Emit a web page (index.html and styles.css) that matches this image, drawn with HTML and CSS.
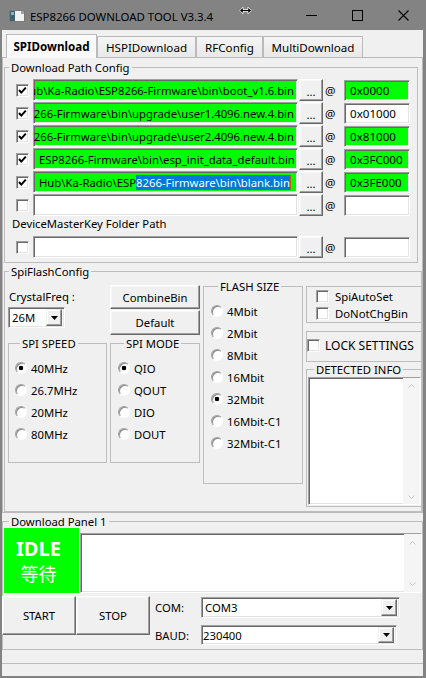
FILE: index.html
```html
<!DOCTYPE html>
<html>
<head>
<meta charset="utf-8">
<link rel="stylesheet" href="styles.css">
</head>
<body>
<div class="win">
  <div class="titlebar">
    <svg class="appicon" width="16" height="12" viewBox="0 0 16 12"><rect x="0.5" y="0.5" width="15" height="11" fill="#f2f2f2" stroke="#7a7a7a"/><rect x="1" y="1" width="5" height="10" fill="#3f6470"/><rect x="2" y="2" width="3" height="3" fill="#8fb2b8"/><rect x="12" y="1" width="3" height="3" fill="#9aa4a6"/></svg>
    <span class="title">ESP8266 DOWNLOAD TOOL V3.3.4</span>
    <svg class="cursor" width="13" height="9" viewBox="0 0 13 9"><path d="M0.7 4.5 L4 1.2 L4 3.5 L9 3.5 L9 1.2 L12.3 4.5 L9 7.8 L9 5.5 L4 5.5 L4 7.8 Z" fill="#000" stroke="#fff" stroke-width="0.8"/></svg>
    <div class="caps">
      <span class="cap"><svg width="11" height="11" viewBox="0 0 11 11"><line x1="0" y1="5.5" x2="11" y2="5.5" stroke="#000"/></svg></span>
      <span class="cap"><svg width="11" height="11" viewBox="0 0 11 11"><rect x="0.5" y="0.5" width="10" height="10" fill="none" stroke="#000"/></svg></span>
      <span class="cap"><svg width="11" height="11" viewBox="0 0 11 11"><path d="M0.5 0.5 L10.5 10.5 M10.5 0.5 L0.5 10.5" stroke="#000" stroke-width="1.1"/></svg></span>
    </div>
  </div>

  <div class="client">
    <div class="tabs">
      <div class="tab sel t1">SPIDownload</div>
      <div class="tab t2">HSPIDownload</div>
      <div class="tab t3">RFConfig</div>
      <div class="tab t4">MultiDownload</div>
    </div>

    <div class="tabpanel">
      <fieldset class="grp g-path">
        <legend>Download Path Config</legend>

        <div class="prow">
          <span class="cb"><svg width="11" height="11" viewBox="0 0 11 11"><polyline points="2,5 4.3,7.6 8.8,2.6" fill="none" stroke="#000" stroke-width="2"/></svg></span>
          <div class="pf green rt"><span>C:\GitHub\Ka-Radio\ESP8266-Firmware\bin\boot_v1.6.bin</span></div>
          <span class="btn dots">...</span>
          <span class="at">@</span>
          <div class="af green">0x0000</div>
        </div>
        <div class="prow">
          <span class="cb"><svg width="11" height="11" viewBox="0 0 11 11"><polyline points="2,5 4.3,7.6 8.8,2.6" fill="none" stroke="#000" stroke-width="2"/></svg></span>
          <div class="pf green rt"><span>Ka-Radio\ESP8266-Firmware\bin\upgrade\user1.4096.new.4.bin</span></div>
          <span class="btn dots">...</span>
          <span class="at">@</span>
          <div class="af">0x01000</div>
        </div>
        <div class="prow">
          <span class="cb"><svg width="11" height="11" viewBox="0 0 11 11"><polyline points="2,5 4.3,7.6 8.8,2.6" fill="none" stroke="#000" stroke-width="2"/></svg></span>
          <div class="pf green rt"><span>Ka-Radio\ESP8266-Firmware\bin\upgrade\user2.4096.new.4.bin</span></div>
          <span class="btn dots">...</span>
          <span class="at">@</span>
          <div class="af green">0x81000</div>
        </div>
        <div class="prow">
          <span class="cb"><svg width="11" height="11" viewBox="0 0 11 11"><polyline points="2,5 4.3,7.6 8.8,2.6" fill="none" stroke="#000" stroke-width="2"/></svg></span>
          <div class="pf green"><span>ESP8266-Firmware\bin\esp_init_data_default.bin</span></div>
          <span class="btn dots">...</span>
          <span class="at">@</span>
          <div class="af green">0x3FC000</div>
        </div>
        <div class="prow">
          <span class="cb"><svg width="11" height="11" viewBox="0 0 11 11"><polyline points="2,5 4.3,7.6 8.8,2.6" fill="none" stroke="#000" stroke-width="2"/></svg></span>
          <div class="pf green"><span>Hub\Ka-Radio\ESP</span><span class="selt">8266-Firmware\bin\blank.bin</span><span class="caret"></span></div>
          <span class="btn dots">...</span>
          <span class="at">@</span>
          <div class="af green">0x3FE000</div>
        </div>
        <div class="prow">
          <span class="cb"></span>
          <div class="pf"></div>
          <span class="btn dots">...</span>
          <span class="at">@</span>
          <div class="af"></div>
        </div>

        <div class="dmk">DeviceMasterKey Folder Path</div>
        <div class="prow">
          <span class="cb"></span>
          <div class="pf"></div>
          <span class="btn dots">...</span>
          <span class="at">@</span>
          <div class="af"></div>
        </div>
      </fieldset>

      <fieldset class="grp g-spi">
        <legend>SpiFlashConfig</legend>
        <div class="spi-body">
          <div class="spi-lr">
            <div class="spi-top">
              <div class="crys">
                <div class="lbl">CrystalFreq :</div>
                <div class="combo c26"><span class="ctext">26M</span><span class="dd"><svg width="7" height="4" viewBox="0 0 7 4"><path d="M0 0 H7 L3.5 4 Z" fill="#000"/></svg></span></div>
              </div>
              <div class="btncol">
                <span class="btn b-comb">CombineBin</span>
                <span class="btn b-def">Default</span>
              </div>
            </div>
            <div class="spi-bot">
              <fieldset class="grp g-speed">
                <legend>SPI SPEED</legend>
                <div class="rrow"><span class="rd on"></span>40MHz</div>
                <div class="rrow"><span class="rd"></span>26.7MHz</div>
                <div class="rrow"><span class="rd"></span>20MHz</div>
                <div class="rrow"><span class="rd"></span>80MHz</div>
              </fieldset>
              <fieldset class="grp g-mode">
                <legend>SPI MODE</legend>
                <div class="rrow"><span class="rd on"></span>QIO</div>
                <div class="rrow"><span class="rd"></span>QOUT</div>
                <div class="rrow"><span class="rd"></span>DIO</div>
                <div class="rrow"><span class="rd"></span>DOUT</div>
              </fieldset>
            </div>
          </div>

          <fieldset class="grp g-flash">
            <legend>FLASH SIZE</legend>
            <div class="rrow"><span class="rd"></span>4Mbit</div>
            <div class="rrow"><span class="rd"></span>2Mbit</div>
            <div class="rrow"><span class="rd"></span>8Mbit</div>
            <div class="rrow"><span class="rd"></span>16Mbit</div>
            <div class="rrow"><span class="rd on"></span>32Mbit</div>
            <div class="rrow"><span class="rd"></span>16Mbit-C1</div>
            <div class="rrow"><span class="rd"></span>32Mbit-C1</div>
          </fieldset>

          <div class="colD">
            <fieldset class="grp g-box1">
              <div class="crow"><span class="cb"></span>SpiAutoSet</div>
              <div class="crow"><span class="cb"></span>DoNotChgBin</div>
            </fieldset>
            <fieldset class="grp g-box2">
              <div class="crow lock"><span class="cb"></span>LOCK SETTINGS</div>
            </fieldset>
            <fieldset class="grp g-det">
              <legend>DETECTED INFO</legend>
              <div class="ta ta-det">
                <div class="ta-body"></div>
                <div class="sb">
                  <svg width="7" height="4" viewBox="0 0 7 4"><polyline points="0.5,3.5 3.5,0.5 6.5,3.5" fill="none" stroke="#c6c6c6"/></svg>
                  <svg width="7" height="4" viewBox="0 0 7 4"><polyline points="0.5,0.5 3.5,3.5 6.5,0.5" fill="none" stroke="#c6c6c6"/></svg>
                </div>
              </div>
            </fieldset>
          </div>
        </div>
      </fieldset>
    </div>

    <fieldset class="grp g-panel">
      <legend>Download Panel 1</legend>
      <div class="prow1">
        <div class="idle"><span class="idle-en">IDLE</span><span class="idle-zh">等待</span></div>
        <div class="ta ta-log">
          <div class="ta-body"></div>
          <div class="sb">
            <svg width="7" height="4" viewBox="0 0 7 4"><polyline points="0.5,3.5 3.5,0.5 6.5,3.5" fill="none" stroke="#c6c6c6"/></svg>
            <svg width="7" height="4" viewBox="0 0 7 4"><polyline points="0.5,0.5 3.5,3.5 6.5,0.5" fill="none" stroke="#c6c6c6"/></svg>
          </div>
        </div>
      </div>
      <div class="prow2">
        <span class="btn b-start">START</span>
        <span class="btn b-stop">STOP</span>
        <div class="ports">
          <span class="plbl l-com">COM:</span>
          <div class="combo c-com"><span class="ctext">COM3</span><span class="dd"><svg width="7" height="4" viewBox="0 0 7 4"><path d="M0 0 H7 L3.5 4 Z" fill="#000"/></svg></span></div>
          <span class="plbl l-baud">BAUD:</span>
          <div class="combo c-baud"><span class="ctext">230400</span><span class="dd"><svg width="7" height="4" viewBox="0 0 7 4"><path d="M0 0 H7 L3.5 4 Z" fill="#000"/></svg></span></div>
        </div>
      </div>
    </fieldset>
    <div class="status"></div>
  </div>
</div>
</body>
</html>
```

FILE: styles.css
```css
* { box-sizing: border-box; }
body {
  margin: 0;
  background: #838383;
  font-family: "Noto Sans", "Noto Sans CJK SC", sans-serif;
  font-size: 11.3px;
  color: #000;
}
.win {
  width: 426px;
  height: 678px;
  display: flex;
  flex-direction: column;
  background: #838383;
  overflow: hidden;
}

/* title bar */
.titlebar {
  height: 30px;
  flex: none;
  display: flex;
  align-items: center;
  position: relative;
}
.appicon { margin-left: 9px; margin-top: 2px; flex: none; }
.title { margin-left: 5px; margin-top: 3px; font-size: 11.4px; white-space: nowrap; }
.cursor { position: absolute; left: 239px; top: 6px; }
.caps { margin-left: auto; display: flex; }
.cap {
  width: 46px;
  height: 30px;
  display: flex;
  align-items: center;
  justify-content: center;
}

/* client */
.client {
  flex: 1;
  margin: 0 3px 2px 2px;
  background: #f0f0f0;
  display: flex;
  flex-direction: column;
}

/* tabs */
.tabs {
  height: 27px;
  flex: none;
  display: flex;
  align-items: flex-end;
  padding-left: 4px;
}
.tab {
  height: 21px;
  border: 1px solid #bababa;
  border-bottom: 0;
  background: linear-gradient(#f5f5f5, #e8e8e8);
  display: flex;
  align-items: center;
  justify-content: center;
  font-size: 11.6px;
}
.tab.sel {
  height: 24px;
  margin-bottom: -1px;
  background: #fafafa;
  font-weight: bold;
  position: relative;
  z-index: 1;
  padding-bottom: 1px;
}
.t1 { width: 91px; }
.t2 { width: 99px; }
.t3 { width: 67px; }
.t4 { width: 100px; }

.tabpanel {
  height: 456px;
  flex: none;
  border: 1px solid #bababa;
  padding: 2px 0 0 1px;
}

/* group boxes */
.grp {
  margin: 0;
  padding: 0;
  border: 1px solid #bdbdbd;
  min-width: 0;
}
.grp > legend {
  padding: 0 2px;
  font-size: 11.3px;
  line-height: 13px;
}

/* download path config */
.g-path {
  margin-top: 1px;
  width: 414px;
  padding: 5px 0 3px 0;
}
.g-path > legend { margin-left: 4px; }

.prow {
  display: flex;
  align-items: center;
  height: 22px;
  margin-bottom: 1px;
  padding-left: 11px;
}

.cb {
  width: 13px;
  height: 13px;
  flex: none;
  background: #fff;
  border: 1px solid;
  border-color: #a0a0a0 #fff #fff #a0a0a0;
  box-shadow: inset 1px 1px #696969, inset -1px -1px #e3e3e3;
  display: flex;
  align-items: center;
  justify-content: center;
}
.prow .cb { margin-right: 4px; }

.pf, .af, .combo, .ta {
  border: 1px solid;
  border-color: #a0a0a0 #fff #fff #a0a0a0;
  box-shadow: inset 1px 1px #696969, inset -1px -1px #e3e3e3;
  background: #fff;
}
.pf {
  width: 265px;
  height: 22px;
  flex: none;
  display: flex;
  align-items: center;
  overflow: hidden;
  white-space: nowrap;
  padding: 0 3px 0 5px;
  font-size: 11.3px;
}
.pf.rt { justify-content: flex-end; }
.pf span { flex: none; }
.pf.green { background: #00ff00; }
.selt { background: #0078d7; color: #fff; }
.caret { width: 1px; height: 15px; background: #c06000; }

.btn {
  background: #f0f0f0;
  border: 1px solid;
  border-color: #fff #696969 #696969 #fff;
  box-shadow: inset -1px -1px #a0a0a0, inset 1px 1px #f8f8f8;
  display: flex;
  align-items: center;
  justify-content: center;
  font-size: 11.3px;
  flex: none;
}
.dots {
  width: 24px;
  height: 22px;
  margin-left: 1px;
  padding-top: 2px;
}
.at {
  margin-left: 2px;
  width: 11px;
  font-size: 11.6px;
  flex: none;
}
.af {
  margin-left: 8px;
  width: 66px;
  height: 21px;
  flex: none;
  display: flex;
  align-items: center;
  padding-left: 5px;
  font-size: 11.6px;
  white-space: nowrap;
  overflow: hidden;
}
.af.green { background: #00ff00; }

.dmk {
  margin: 1px 0 6px 7px;
  line-height: 13px;
}

/* spi flash config */
.g-spi {
  margin-top: 2px;
  width: 418px;
  height: 247px;
}
.g-spi > legend { margin-left: 4px; }
.spi-body {
  display: flex;
  align-items: flex-start;
  padding-left: 3px;
}
.spi-lr { width: 192px; flex: none; }
.spi-top { height: 59px; display: flex; }
.crys { width: 99px; flex: none; }
.lbl { margin-top: 12px; line-height: 13px; padding-left: 1px; }
.combo {
  display: flex;
  align-items: center;
  justify-content: space-between;
  padding: 0 2px 0 3px;
}
.c26 { margin-top: 4px; width: 57px; height: 21px; }
.dd {
  width: 16px;
  height: 17px;
  flex: none;
  background: #f0f0f0;
  border: 1px solid;
  border-color: #f0f0f0 #696969 #696969 #f0f0f0;
  box-shadow: inset -1px -1px #a0a0a0, inset 1px 1px #fff;
  display: flex;
  align-items: center;
  justify-content: center;
}
.btncol {
  margin-left: 3px;
  width: 90px;
  display: flex;
  flex-direction: column;
}
.b-comb { margin-top: 7px; height: 24px; }
.b-def { margin-top: 1px; height: 25px; }

.spi-bot { display: flex; }
.g-speed, .g-mode {
  height: 126px;
  padding: 7px 0 0 6px;
}
.g-speed { width: 99px; }
.g-mode { width: 90px; margin-left: 3px; padding-left: 7px; }
.g-speed > legend { margin-left: 5px; }
.g-mode > legend { margin-left: 6px; }

.rrow {
  height: 22px;
  display: flex;
  align-items: center;
}
.rd {
  width: 12px;
  height: 12px;
  flex: none;
  border-radius: 50%;
  border: 1px solid;
  border-color: #a0a0a0 #fff #fff #a0a0a0;
  box-shadow: inset 1px 1px #8a8a8a;
  background: #fff;
  margin-right: 4px;
}
.rd.on {
  background: radial-gradient(circle at 50% 50%, #000 0 2px, #fff 2.6px);
}

.g-flash {
  margin-left: 3px;
  margin-top: 2px;
  width: 100px;
  height: 204px;
  flex: none;
  padding: 7px 0 0 7px;
}
.g-flash > legend { margin-left: 7px; }

.colD {
  margin-left: 3px;
  width: 116px;
  flex: none;
}
.g-box1 {
  margin-top: 8px;
  height: 37px;
  padding: 1px 0 0 9px;
}
.crow {
  height: 17px;
  display: flex;
  align-items: center;
}
.crow .cb { margin-right: 6px; }
.g-box2 {
  margin-top: 8px;
  height: 31px;
  padding: 0;
}
.crow.lock { height: 27px; font-size: 12px; }
.crow.lock .cb { margin-right: 5px; }
.g-det {
  margin-top: 1px;
  height: 144px;
  padding: 1px 0 0 1px;
}
.g-det > legend { margin-left: 6px; }

.ta { display: flex; }
.ta-body { flex: 1; }
.sb {
  width: 17px;
  flex: none;
  display: flex;
  flex-direction: column;
  justify-content: space-between;
  align-items: center;
  background: #f5f5f5;
}
.ta-det { width: 113px; height: 128px; }
.ta-det .sb { padding: 6px 0 5px; }

/* download panel */
.g-panel {
  margin-top: 2px;
  width: 421px;
  height: 135px;
  flex: none;
}
.g-panel > legend { margin-left: 6px; }
.prow1 {
  display: flex;
  align-items: flex-end;
  height: 65px;
}
.idle {
  margin-left: 1px;
  width: 75px;
  height: 65px;
  background: #00ff00;
  color: #fff;
  display: flex;
  flex-direction: column;
  align-items: center;
  justify-content: center;
  padding-right: 6px;
}
.idle-en {
  font-weight: bold;
  font-size: 20px;
  line-height: 22px;
}
.idle-zh {
  font-family: "Noto Sans CJK SC", sans-serif;
  font-size: 18px;
  line-height: 20px;
  margin-top: 3px;
}
.ta-log {
  margin-left: 1px;
  width: 342px;
  height: 60px;
}
.ta-log .sb { padding: 7px 0 6px; }

.prow2 {
  display: flex;
  margin-top: 3px;
}
.b-start {
  margin-left: -1px;
  width: 74px;
  height: 39px;
}
.b-stop { width: 74px; height: 39px; }
.ports {
  margin-left: 5px;
  display: grid;
  grid-template-columns: 46px auto;
  grid-template-rows: 21px 20px;
  row-gap: 7px;
  margin-top: 1px;
  align-items: center;
}
.c-com { width: 199px; height: 21px; }
.c-baud { width: 196px; height: 20px; padding-left: 1px; }
.c-baud .dd { height: 16px; }

.status {
  margin-top: 13px;
  flex: 1;
  border-top: 1px solid #bdbdbd;
}
```
